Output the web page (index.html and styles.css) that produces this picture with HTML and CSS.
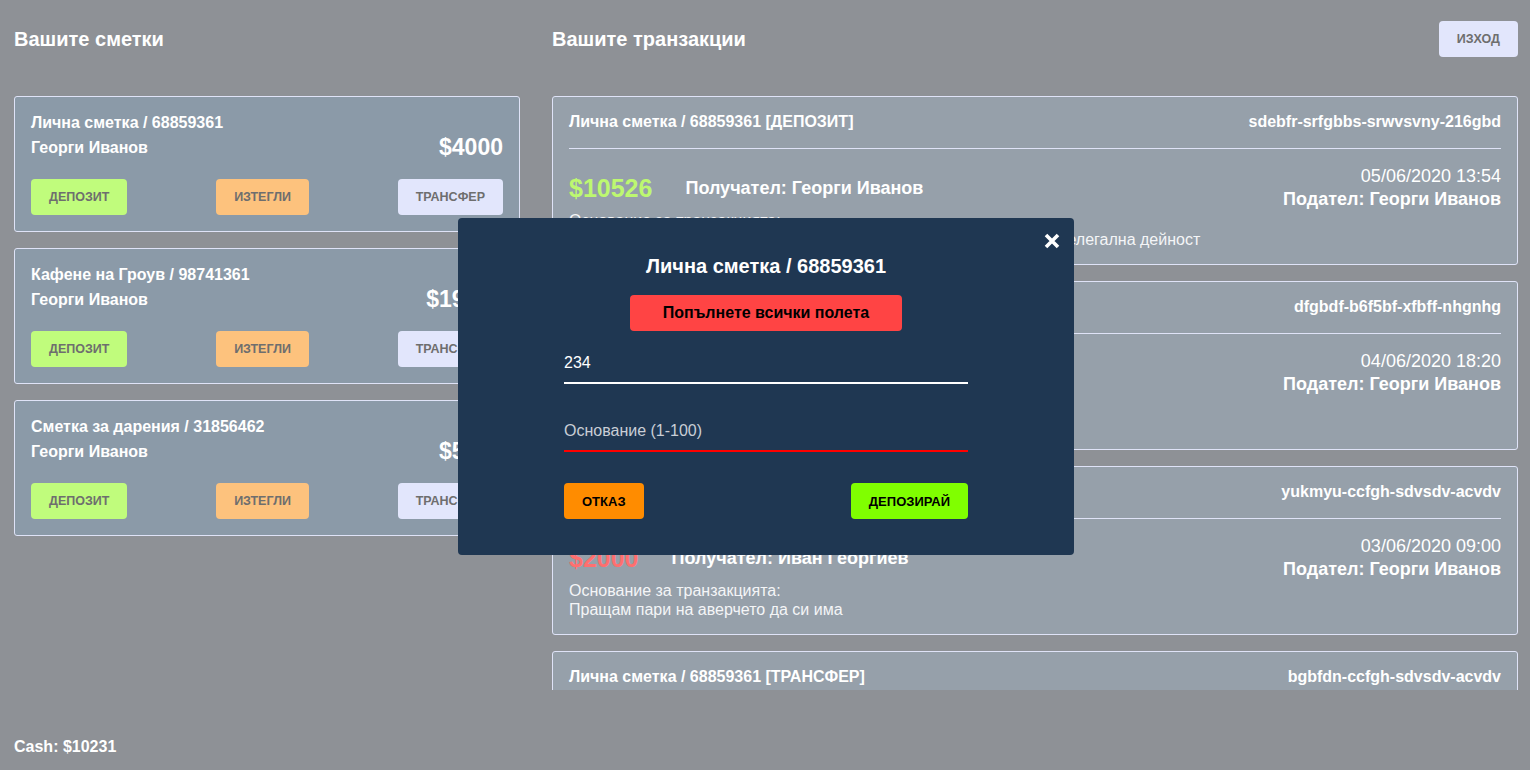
FILE: index.html
```html
<!DOCTYPE html>
<html lang="bg">
<head>
<meta charset="utf-8">
<title>Банкиране</title>
<link rel="stylesheet" href="styles.css">
</head>
<body>
<div class="app">
  <div class="columns">
    <section class="accounts-col">
      <header class="col-head"><h2 class="col-title">Вашите сметки</h2></header>
      <div class="accounts">
        <article class="account">
          <div class="account-title">Лична сметка / 68859361</div>
          <div class="account-row"><span>Георги Иванов</span><span class="account-amount">$4000</span></div>
          <div class="account-actions">
            <button class="btn btn-deposit">Депозит</button>
            <button class="btn btn-withdraw">Изтегли</button>
            <button class="btn btn-transfer">Трансфер</button>
          </div>
        </article>
        <article class="account">
          <div class="account-title">Кафене на Гроув / 98741361</div>
          <div class="account-row"><span>Георги Иванов</span><span class="account-amount">$19350</span></div>
          <div class="account-actions">
            <button class="btn btn-deposit">Депозит</button>
            <button class="btn btn-withdraw">Изтегли</button>
            <button class="btn btn-transfer">Трансфер</button>
          </div>
        </article>
        <article class="account">
          <div class="account-title">Сметка за дарения / 31856462</div>
          <div class="account-row"><span>Георги Иванов</span><span class="account-amount">$5231</span></div>
          <div class="account-actions">
            <button class="btn btn-deposit">Депозит</button>
            <button class="btn btn-withdraw">Изтегли</button>
            <button class="btn btn-transfer">Трансфер</button>
          </div>
        </article>
      </div>
    </section>

    <section class="tx-col">
      <header class="col-head"><h2 class="col-title">Вашите транзакции</h2><button class="btn btn-exit">Изход</button></header>
      <div class="tx-list">
        <article class="tx">
          <div class="tx-head"><span>Лична сметка / 68859361 [ДЕПОЗИТ]</span><span>sdebfr-srfgbbs-srwvsvny-216gbd</span></div>
          <div class="tx-body">
            <div class="tx-main"><span class="tx-amount tx-in">$10526</span><span class="tx-party">Получател: Георги Иванов</span></div>
            <div class="tx-meta"><div class="tx-date">05/06/2020 13:54</div><div class="tx-party">Подател: Георги Иванов</div></div>
          </div>
          <div class="tx-note">Основание за транзакцията:<br>Превеждам пари от личната си сметка за финансиране на моята нелегална дейност</div>
        </article>
        <article class="tx">
          <div class="tx-head"><span>Лична сметка / 68859361 [ТЕГЛЕНЕ]</span><span>dfgbdf-b6f5bf-xfbff-nhgnhg</span></div>
          <div class="tx-body">
            <div class="tx-main"><span class="tx-amount tx-out">$1500</span><span class="tx-party">Получател: Георги Иванов</span></div>
            <div class="tx-meta"><div class="tx-date">04/06/2020 18:20</div><div class="tx-party">Подател: Георги Иванов</div></div>
          </div>
          <div class="tx-note">Основание за транзакцията:<br>Теглене на пари в брой</div>
        </article>
        <article class="tx">
          <div class="tx-head"><span>Лична сметка / 68859361 [ТРАНСФЕР]</span><span>yukmyu-ccfgh-sdvsdv-acvdv</span></div>
          <div class="tx-body">
            <div class="tx-main"><span class="tx-amount tx-out">$2000</span><span class="tx-party">Получател: Иван Георгиев</span></div>
            <div class="tx-meta"><div class="tx-date">03/06/2020 09:00</div><div class="tx-party">Подател: Георги Иванов</div></div>
          </div>
          <div class="tx-note">Основание за транзакцията:<br>Пращам пари на аверчето да си има</div>
        </article>
        <article class="tx">
          <div class="tx-head"><span>Лична сметка / 68859361 [ТРАНСФЕР]</span><span>bgbfdn-ccfgh-sdvsdv-acvdv</span></div>
          <div class="tx-body">
            <div class="tx-main"><span class="tx-amount tx-out">$700</span><span class="tx-party">Получател: Иван Георгиев</span></div>
            <div class="tx-meta"><div class="tx-date">01/06/2020 11:15</div><div class="tx-party">Подател: Георги Иванов</div></div>
          </div>
          <div class="tx-note">Основание за транзакцията:<br>Връщам заема</div>
        </article>
      </div>
    </section>
  </div>
  <footer class="cash">Cash: $10231</footer>
</div>

<div class="overlay">
  <div class="modal">
    <button class="modal-close" aria-label="Затвори">
      <svg width="16" height="16" viewBox="0 0 16 16"><path d="M2 2L14 14M14 2L2 14" stroke="#fff" stroke-width="3.6" fill="none"/></svg>
    </button>
    <h3 class="modal-title">Лична сметка / 68859361</h3>
    <div class="modal-error">Попълнете всички полета</div>
    <input class="field" type="text" value="234">
    <input class="field field-invalid field-gap" type="text" placeholder="Основание (1-100)">
    <div class="modal-actions">
      <button class="btn btn-cancel">Отказ</button>
      <button class="btn btn-confirm">Депозирай</button>
    </div>
  </div>
</div>
</body>
</html>
```

FILE: styles.css
```css
* { box-sizing: border-box; }

html, body {
  margin: 0;
  height: 770px;
  overflow: hidden;
}

body {
  background: #8e9196;
  font-family: "Liberation Sans", Arial, sans-serif;
  color: #fff;
}

.app {
  padding: 21px 12px 0 14px;
}

.columns {
  display: grid;
  grid-template-columns: 506px 1fr;
  column-gap: 32px;
}

.col-head {
  height: 36px;
  display: flex;
  align-items: center;
  justify-content: space-between;
}

.col-title {
  margin: 0;
  font-size: 20px;
  font-weight: bold;
}

.accounts {
  margin-top: 39px;
  display: flex;
  flex-direction: column;
  gap: 16px;
}

.account {
  background: #8b9aa8;
  border: 1px solid #dfe3f7;
  border-radius: 3px;
  padding: 13px 16px 16px;
  font-size: 16px;
  font-weight: bold;
}

.account-title {
  line-height: 25px;
}

.account-row {
  display: flex;
  justify-content: space-between;
  align-items: center;
  height: 25px;
}

.account-amount {
  font-size: 23px;
}

.account-actions {
  margin-top: 19px;
  display: flex;
  justify-content: space-between;
}

.btn {
  height: 36px;
  padding: 0 18px;
  border: none;
  border-radius: 4px;
  font-family: "Liberation Sans", Arial, sans-serif;
  font-size: 12.5px;
  font-weight: bold;
  text-transform: uppercase;
  color: #6e6e6e;
  cursor: pointer;
}

.btn-deposit { background: #c0fc7c; }
.btn-withdraw { background: #fdc27d; }
.btn-transfer,
.btn-exit { background: #e2e6fc; }

.tx-list {
  margin-top: 39px;
  height: 594px;
  overflow: hidden;
  display: flex;
  flex-direction: column;
  gap: 16px;
}

.tx {
  flex-shrink: 0;
  background: #96a0aa;
  border: 1px solid #dfe3f7;
  border-radius: 3px;
  padding: 0 16px 15px;
}

.tx-head {
  display: flex;
  justify-content: space-between;
  padding: 16px 0 17px;
  border-bottom: 1px solid #dfe3f7;
  font-size: 16px;
  font-weight: bold;
  line-height: 18px;
}

.tx-body {
  padding-top: 16px;
  display: flex;
  justify-content: space-between;
  align-items: center;
}

.tx-main {
  display: flex;
  align-items: center;
  gap: 33px;
}

.tx-amount {
  font-size: 25px;
  font-weight: bold;
}

.tx-in { color: #bdf870; }
.tx-out { color: #ff6f6f; }

.tx-party {
  font-size: 18px;
  font-weight: bold;
  line-height: 23px;
}

.tx-meta {
  text-align: right;
}

.tx-date {
  font-size: 18px;
  line-height: 23px;
}

.tx-note {
  font-size: 16px;
  line-height: 19px;
  font-weight: 300;
  color: #f4f5f7;
}

.cash {
  margin-top: 48px;
  font-size: 16px;
  font-weight: bold;
  line-height: 18px;
}

.overlay {
  position: fixed;
  inset: 0;
  display: flex;
  align-items: center;
  justify-content: center;
  padding: 3px 0 0 2px;
}

.modal {
  position: relative;
  width: 616px;
  background: #1f3752;
  border-radius: 4px;
  padding: 36px 106px;
  display: flex;
  flex-direction: column;
  align-items: center;
}

.modal-close {
  position: absolute;
  top: 15px;
  right: 14px;
  width: 16px;
  height: 16px;
  padding: 0;
  border: none;
  background: none;
  display: flex;
  cursor: pointer;
}

.modal-title {
  margin: 0;
  font-size: 20px;
  line-height: 24px;
  font-weight: bold;
}

.modal-error {
  margin-top: 17px;
  height: 36px;
  padding: 0 33px;
  display: flex;
  align-items: center;
  background: #ff4444;
  border-radius: 4px;
  color: #000;
  font-size: 16px;
  font-weight: bold;
}

.field {
  margin-top: 13px;
  width: 100%;
  height: 40px;
  padding: 0;
  background: transparent;
  border: none;
  border-bottom: 2px solid #fff;
  color: #fff;
  font-family: "Liberation Sans", Arial, sans-serif;
  font-size: 16px;
  outline: none;
}

.field::placeholder {
  color: #c9ced6;
}

.field-gap { margin-top: 28px; }

.field-invalid { border-bottom-color: #ff0000; }

.modal-actions {
  margin-top: 31px;
  width: 100%;
  display: flex;
  justify-content: space-between;
}

.btn-cancel,
.btn-confirm {
  font-size: 13px;
  color: #000;
}

.btn-cancel { background: #ff8c00; }
.btn-confirm { background: #80ff00; }
```
